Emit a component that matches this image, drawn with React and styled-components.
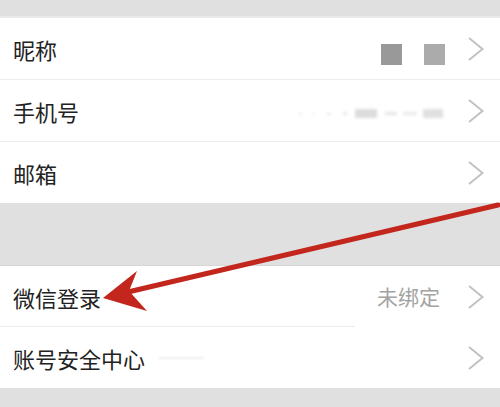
import React from 'react';
import styled, { createGlobalStyle } from 'styled-components';

const GlobalStyle = createGlobalStyle`
    html, body {
        margin: 0;
        padding: 0;
        background: #e0e0e0;
    }
    body {
        font-family: "Noto Sans CJK SC", "Noto Sans", sans-serif;
    }
`;

const Page = styled.div`
    position: relative;
    width: 500px;
    height: 407px;
    overflow: hidden;
    background: #e0e0e0;
    display: flex;
    flex-direction: column;
`;

const TopBand = styled.div`
    height: 16px;
    border-bottom: 2px solid #e9e9e9;
    flex-shrink: 0;
`;

const Spacer = styled.div`
    height: 62px;
    border-bottom: 1px solid #d6d6d6;
    flex-shrink: 0;
`;

const Group = styled.div`
    background: #fff;
    display: flex;
    flex-direction: column;
`;

const Row = styled.div`
    position: relative;
    height: 61px;
    display: flex;
    align-items: center;
    padding: 0 15px 0 13px;
    box-sizing: border-box;
    border-bottom: ${(p) => (p.$divider ? '1px solid #ececec' : 'none')};
    height: ${(p) => (p.$divider ? '62px' : '61px')};
`;

const PartialDivider = styled.div`
    position: absolute;
    left: 0;
    bottom: 0;
    width: 355px;
    height: 1px;
    background: #ececec;
`;

const Label = styled.span`
    font-size: 22px;
    color: #222;
    line-height: 1;
    flex: 1;
    display: flex;
    align-items: center;
    gap: 14px;
`;

const Value = styled.span`
    font-size: 21px;
    color: #a3a3a3;
    line-height: 1;
    margin-right: 27px;
`;

const Squares = styled.div`
    display: flex;
    gap: 22px;
    margin-right: 22px;
    margin-top: 12px;
`;

const Square = styled.div`
    width: 21px;
    height: 21px;
    background: ${(p) => p.$tone};
`;

const Smudge = styled.div`
    display: flex;
    align-items: center;
    gap: 4px;
    margin-right: 24px;
    margin-top: 6px;
    filter: blur(1.5px);
`;

const Dot = styled.div`
    width: ${(p) => p.$w}px;
    height: ${(p) => p.$h}px;
    background: ${(p) => p.$tone};
    margin-left: ${(p) => p.$gap || 0}px;
`;

const Trail = styled.div`
    width: 45px;
    height: 2px;
    background: #eeeeee;
    filter: blur(0.8px);
`;

const Chevron = () => (
    <svg width="18" height="26" viewBox="0 0 18 26" fill="none">
        <path d="M2 2 L15.5 13 L2 24" stroke="#c2c2c2" strokeWidth="2" strokeLinejoin="miter" />
    </svg>
);

const ArrowLayer = styled.svg`
    position: absolute;
    left: 0;
    top: 0;
    pointer-events: none;
`;

const PhoneSmudge = () => (
    <Smudge>
        <Dot $w={3} $h={2} $tone="#ececec" />
        <Dot $w={3} $h={2} $tone="#ececec" $gap={6} />
        <Dot $w={4} $h={2} $tone="#e6e6e6" $gap={8} />
        <Dot $w={4} $h={3} $tone="#e6e6e6" $gap={8} />
        <Dot $w={22} $h={9} $tone="#dcdcdc" $gap={4} />
        <Dot $w={12} $h={3} $tone="#e4e4e4" $gap={4} />
        <Dot $w={14} $h={3} $tone="#e8e8e8" $gap={2} />
        <Dot $w={20} $h={9} $tone="#e0e0e0" $gap={2} />
    </Smudge>
);

export default function App() {
    return (
        <>
            <GlobalStyle />
            <Page>
                <TopBand />
                <Group>
                    <Row $divider>
                        <Label>昵称</Label>
                        <Squares>
                            <Square $tone="#999999" />
                            <Square $tone="#ababab" />
                        </Squares>
                        <Chevron />
                    </Row>
                    <Row $divider>
                        <Label>手机号</Label>
                        <PhoneSmudge />
                        <Chevron />
                    </Row>
                    <Row>
                        <Label>邮箱</Label>
                        <Chevron />
                    </Row>
                </Group>
                <Spacer />
                <Group>
                    <Row>
                        <Label>微信登录</Label>
                        <Value>未绑定</Value>
                        <Chevron />
                        <PartialDivider />
                    </Row>
                    <Row>
                        <Label>
                            账号安全中心
                            <Trail />
                        </Label>
                        <Chevron />
                    </Row>
                </Group>

                <ArrowLayer width="500" height="407" viewBox="0 0 500 407">
                    <line x1="498" y1="205" x2="128" y2="292" stroke="#c3261c" strokeWidth="5" strokeLinecap="round" />
                    <polygon points="103,298 137,271 129,291 147,311" fill="#c3261c" />
                </ArrowLayer>
            </Page>
        </>
    );
}
